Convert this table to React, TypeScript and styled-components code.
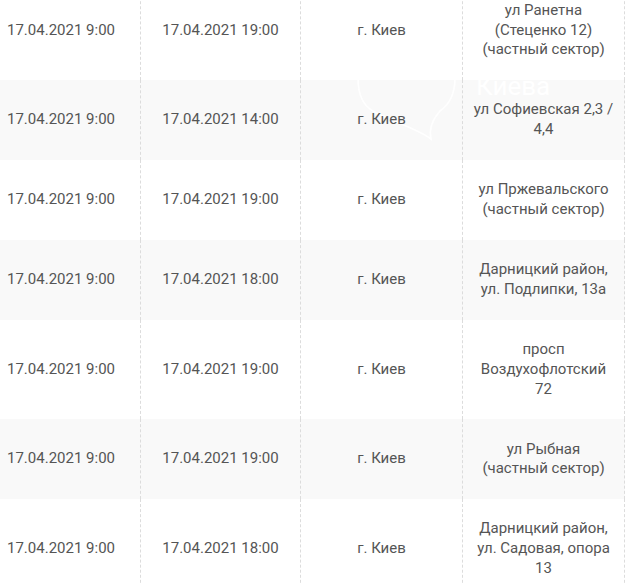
import React from 'react';
import styled, { createGlobalStyle } from 'styled-components';

const GlobalStyle = createGlobalStyle`
    html, body {
        margin: 0;
        padding: 0;
        background: #ffffff;
        overflow: hidden;
    }
`;

const Page = styled.div`
    position: relative;
    width: 625px;
    height: 584px;
    overflow: hidden;
    font-family: Roboto, 'Liberation Sans', sans-serif;
    font-size: 15px;
    line-height: 19.7px;
    color: #555555;
`;

const Table = styled.div`
    display: grid;
    grid-template-columns: 141px 160px 162px 162px;
    margin-top: -19px;
`;

const Row = styled.div<{ $shaded: boolean }>`
    display: contents;

    & > div {
        background: ${(p) => (p.$shaded ? '#f9f9f9' : '#ffffff')};
    }
`;

const Cell = styled.div<{ $align?: 'left' | 'center' }>`
    display: flex;
    align-items: center;
    justify-content: ${(p) => (p.$align === 'left' ? 'flex-start' : 'center')};
    text-align: ${(p) => p.$align ?? 'center'};
    padding: 20px 7px;
    border-right: 1px dashed #dcdcdc;
    min-height: 40px;
`;

// text sits above the watermark, the watermark above the row backgrounds
const Text = styled.span`
    position: relative;
    z-index: 2;
`;

const Line = styled.span`
    display: block;
`;

const Watermark = styled.svg`
    position: absolute;
    left: 340px;
    top: 20px;
    z-index: 1;
    pointer-events: none;
`;

type Outage = {
    from: string;
    to: string;
    city: string;
    address: string[];
};

const rows: Outage[] = [
    { from: '17.04.2021 9:00', to: '17.04.2021 19:00', city: 'г. Киев', address: ['ул Ранетна', '(Стеценко 12)', '(частный сектор)'] },
    { from: '17.04.2021 9:00', to: '17.04.2021 14:00', city: 'г. Киев', address: ['ул Софиевская 2,3 /', '4,4'] },
    { from: '17.04.2021 9:00', to: '17.04.2021 19:00', city: 'г. Киев', address: ['ул Пржевальского', '(частный сектор)'] },
    { from: '17.04.2021 9:00', to: '17.04.2021 18:00', city: 'г. Киев', address: ['Дарницкий район,', 'ул. Подлипки, 13а'] },
    { from: '17.04.2021 9:00', to: '17.04.2021 19:00', city: 'г. Киев', address: ['просп', 'Воздухофлотский', '72'] },
    { from: '17.04.2021 9:00', to: '17.04.2021 19:00', city: 'г. Киев', address: ['ул Рыбная', '(частный сектор)'] },
    { from: '17.04.2021 9:00', to: '17.04.2021 18:00', city: 'г. Киев', address: ['Дарницкий район,', 'ул. Садовая, опора', '13'] }
];

function App() {
    return (
        <Page>
            <GlobalStyle />
            <Table>
                {rows.map((r, i) => (
                    <Row key={i} $shaded={i % 2 === 1}>
                        <Cell $align="left">
                            <Text>{r.from}</Text>
                        </Cell>
                        <Cell>
                            <Text>{r.to}</Text>
                        </Cell>
                        <Cell>
                            <Text>{r.city}</Text>
                        </Cell>
                        <Cell>
                            <Text>
                                {r.address.map((l, j) => (
                                    <Line key={j}>{l}</Line>
                                ))}
                            </Text>
                        </Cell>
                    </Row>
                ))}
            </Table>
            <Watermark width="240" height="130" viewBox="0 0 240 130">
                <path
                    d="M66 8 C 38 8 18 30 18 58 C 18 74 22 85 33 91 C 50 101 76 108 91 119 C 89 110 92 100 100 91 C 110 84 115 72 115 58 C 115 30 94 8 66 8 Z"
                    fill="none"
                    stroke="#ffffff"
                    strokeWidth="1.6"
                />
                <text x="136" y="75" fill="#ffffff" fontSize="26" fontFamily="Roboto, sans-serif">
                    Киева
                </text>
            </Watermark>
        </Page>
    );
}

export default App;
